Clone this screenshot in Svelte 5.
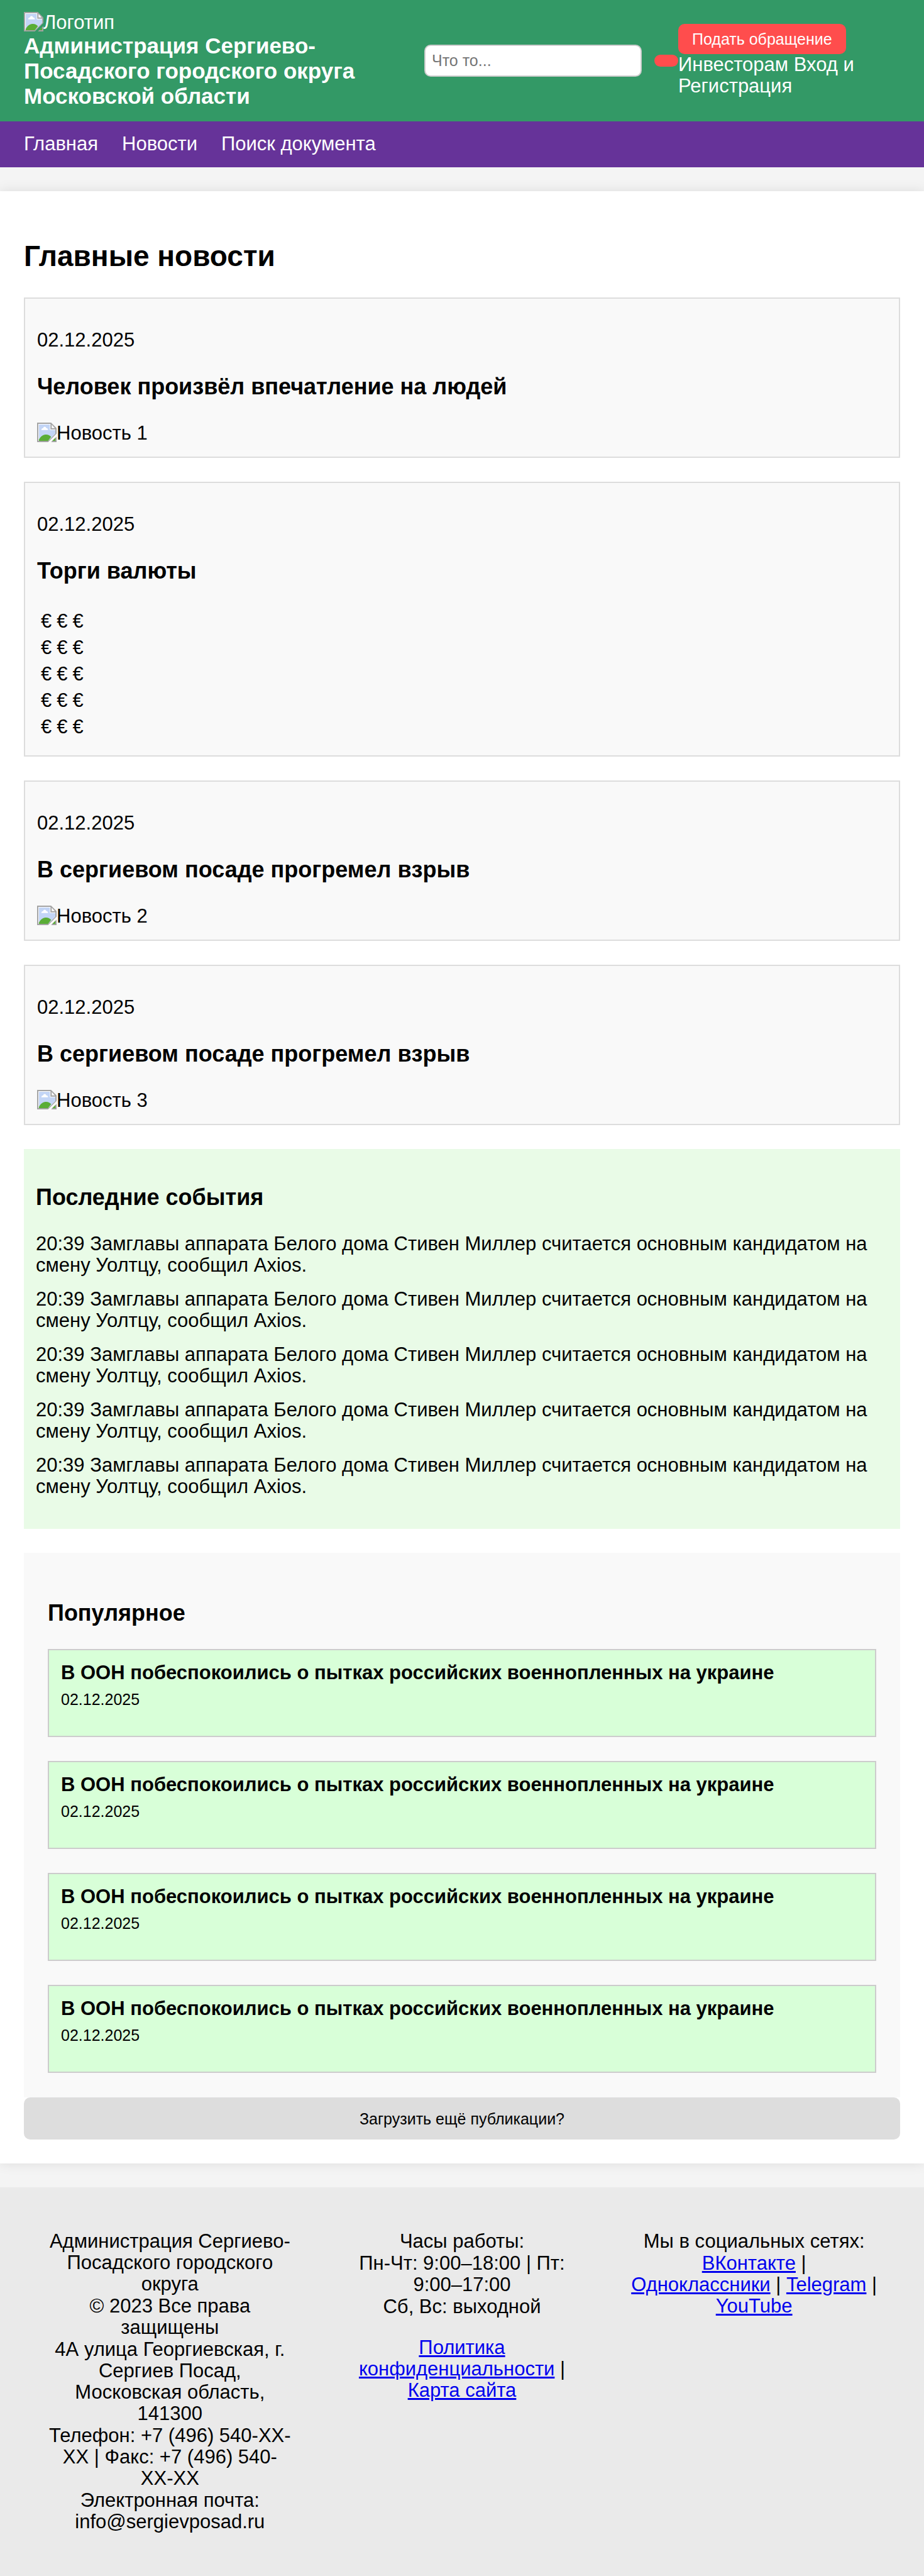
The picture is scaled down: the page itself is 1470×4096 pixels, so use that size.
<script>
  const events = Array(5).fill('20:39 Замглавы аппарата Белого дома Стивен Миллер считается основным кандидатом на смену Уолтцу, сообщил Axios.');
  const popular = Array(4).fill({
    title: 'В ООН побеспокоились о пытках российских военнопленных на украине',
    date: '02.12.2025'
  });
  const news = [
    { title: 'Человек произвёл впечатление на людей', image: 'Новость 1' },
    { title: 'Торги валюты', rows: 5 },
    { title: 'В сергиевом посаде прогремел взрыв', image: 'Новость 2' },
    { title: 'В сергиевом посаде прогремел взрыв', image: 'Новость 3' }
  ];
  let query = $state('');
</script>

{#snippet placeholder(text)}
  <div class="image">
    <svg viewBox="0 0 16 16" aria-hidden="true">
      <path d="M0 0h11.500L16 4.500V9L9 16H0z" fill="#a3a3a3" />
      <path d="M1 1h10v4.500h4V9l-6 6H1z" fill="#fff" />
      <path d="M1.500 1.500h9V6H15v3l-6 6H1.500z" fill="#c3d5f6" />
      <path d="M3.500 6c0-1 .7-1.500 1.500-1.500C5.300 3 7.200 3 7.500 4.500 8.500 4.400 9 5.200 9 6z" fill="#fff" />
      <path d="M1.500 15v-1C3 11 5 9.800 7.500 9.800c1.700 0 3 .6 4 2L9 15z" fill="#5aad36" />
      <path d="M12 1.700L14.600 4.500H12z" fill="#fff" />
      <path d="M16 11.500V16h-4.500z" fill="#a3a3a3" />
      <path d="M15 12.500V15h-2.500z" fill="#5aad36" />
    </svg><span>{text}</span>
  </div>
{/snippet}

<header>
  <div class="brand">
    {@render placeholder('Логотип')}
    <div class="name">Администрация Сергиево-Посадского городского округа Московской области</div>
  </div>
  <form class="search" onsubmit={(e) => e.preventDefault()}>
    <input type="text" placeholder="Что то..." aria-label="Поиск" bind:value={query} />
    <button class="go" type="submit" aria-label="Найти"></button>
  </form>
  <div class="account">
    <button class="appeal" type="button">Подать обращение</button>
    <div>Инвесторам Вход и Регистрация</div>
  </div>
</header>

<nav>
  <a href="#home">Главная</a>
  <a href="#news">Новости</a>
  <a href="#search">Поиск документа</a>
</nav>

<main>
  <h1>Главные новости</h1>
  <div class="news">
    {#each news as item}
      <article>
        <p>02.12.2025</p>
        <h2>{item.title}</h2>
        {#if item.rows}
          <table>
            <tbody>
              {#each Array(item.rows) as _}
                <tr><td>€</td><td>€</td><td>€</td></tr>
              {/each}
            </tbody>
          </table>
        {:else}
          {@render placeholder(item.image)}
        {/if}
      </article>
    {/each}
  </div>

  <section class="events">
    <h2>Последние события</h2>
    <ul>
      {#each events as event}
        <li>{event}</li>
      {/each}
    </ul>
  </section>

  <section class="popular">
    <h2>Популярное</h2>
    <div class="cards">
      {#each popular as item}
        <article class="card">
          <h3>{item.title}</h3>
          <p>{item.date}</p>
        </article>
      {/each}
    </div>
  </section>
  <button class="more" type="button">Загрузить ещё публикации?</button>
</main>

<footer>
  <div class="col">
    <p>Администрация Сергиево-Посадского городского округа</p>
    <p>© 2023 Все права защищены</p>
    <p>4А улица Георгиевская, г. Сергиев Посад, Московская область, 141300</p>
    <p>Телефон: +7 (496) 540-XX-XX | Факс: +7 (496) 540-XX-XX</p>
    <p>Электронная почта: info@sergievposad.ru</p>
  </div>
  <div class="col">
    <p>Часы работы:</p>
    <p>Пн-Чт: 9:00–18:00 | Пт: 9:00–17:00</p>
    <p>Сб, Вс: выходной</p>
    <p class="links"><a href="#privacy">Политика конфиденциальности</a> | <a href="#map">Карта сайта</a></p>
  </div>
  <div class="col">
    <p>Мы в социальных сетях:</p>
    <p><a href="#vk">ВКонтакте</a> | <a href="#ok">Одноклассники</a> | <a href="#tg">Telegram</a> | <a href="#yt">YouTube</a></p>
  </div>
</footer>

<style>
  :global(body) {
    margin: 0;
    background: #f4f4f4;
    color: #000;
    font: 31px/34px "Liberation Sans", Arial, sans-serif;
  }
  h1, h2, h3, p, ul {
    margin: 0;
    padding: 0;
  }
  button, input {
    box-sizing: border-box;
    margin: 0;
    font: 25px/30px "Liberation Sans", Arial, sans-serif;
  }
  button {
    border: 0;
    border-radius: 10px;
    cursor: pointer;
  }
  header {
    display: grid;
    grid-template-columns: 637fr 404fr 353fr;
    align-items: center;
    padding: 19px 38px 20px;
    background: #339966;
    color: #fff;
  }
  .image {
    display: flex;
    align-items: flex-start;
  }
  .image svg {
    width: 31px;
    height: 31px;
    flex: none;
  }
  .name {
    font-size: 35px;
    line-height: 40px;
    font-weight: bold;
  }
  .search {
    display: flex;
    align-items: center;
    gap: 20px;
  }
  .search input {
    flex: 1;
    min-width: 0;
    height: 51px;
    padding: 0 10px;
    border: 2px solid #ccc;
    border-radius: 10px;
    background: #fff;
  }
  .search input::placeholder {
    color: #757575;
    opacity: 1;
  }
  .go, .appeal {
    background: #ff4d4d;
    color: #fff;
  }
  .go {
    width: 38px;
    height: 19px;
    padding: 0;
  }
  .appeal {
    display: block;
    height: 48px;
    padding: 0 22px;
  }
  nav {
    display: flex;
    gap: 38px;
    padding: 19px 38px 20px;
    background: #663399;
  }
  nav a {
    color: #fff;
    text-decoration: none;
  }
  main {
    margin: 38px 0;
    padding: 38px;
    background: #fff;
    box-shadow: 0 0 19px rgba(0, 0, 0, 0.1);
  }
  h1 {
    margin: 38px 0 39px;
    font-size: 46px;
    line-height: 54px;
  }
  h2 {
    margin: 36px 0;
    font-size: 36px;
    line-height: 42px;
  }
  .news {
    display: grid;
    gap: 38px;
  }
  .news article {
    padding: 49px 19px 20px;
    border: 2px solid #ddd;
    background: #f9f9f9;
  }
  table {
    border-spacing: 4px;
    padding-bottom: 2px;
  }
  td {
    padding: 2px;
  }
  .events {
    margin: 38px 0;
    padding: 20px 19px 50px;
    background: #e9fbe7;
  }
  .events::before, .popular::before {
    content: "";
    display: table;
  }
  ul {
    display: grid;
    gap: 20px;
    list-style: none;
  }
  .popular {
    padding: 39px 38px;
    background: #f9f9f9;
  }
  .cards {
    display: grid;
    gap: 38px;
  }
  .card {
    padding: 19px 19px 44px;
    border: 2px solid #ccc;
    background: #d8ffd8;
  }
  .card h3 {
    margin-bottom: 11px;
    font-size: 31px;
  }
  .card p {
    font-size: 25px;
    line-height: 28px;
  }
  .more {
    display: block;
    width: 100%;
    height: 67px;
    background: #ddd;
    color: #000;
  }
  footer {
    display: grid;
    grid-template-columns: repeat(3, 1fr);
    padding: 69px 38px;
    background: #eaeaea;
    text-align: center;
  }
  .col {
    display: flex;
    flex-direction: column;
    gap: 1px;
    padding: 0 36px;
  }
  .links {
    margin-top: 30px;
  }
  footer a {
    color: #0000ee;
  }
</style>
